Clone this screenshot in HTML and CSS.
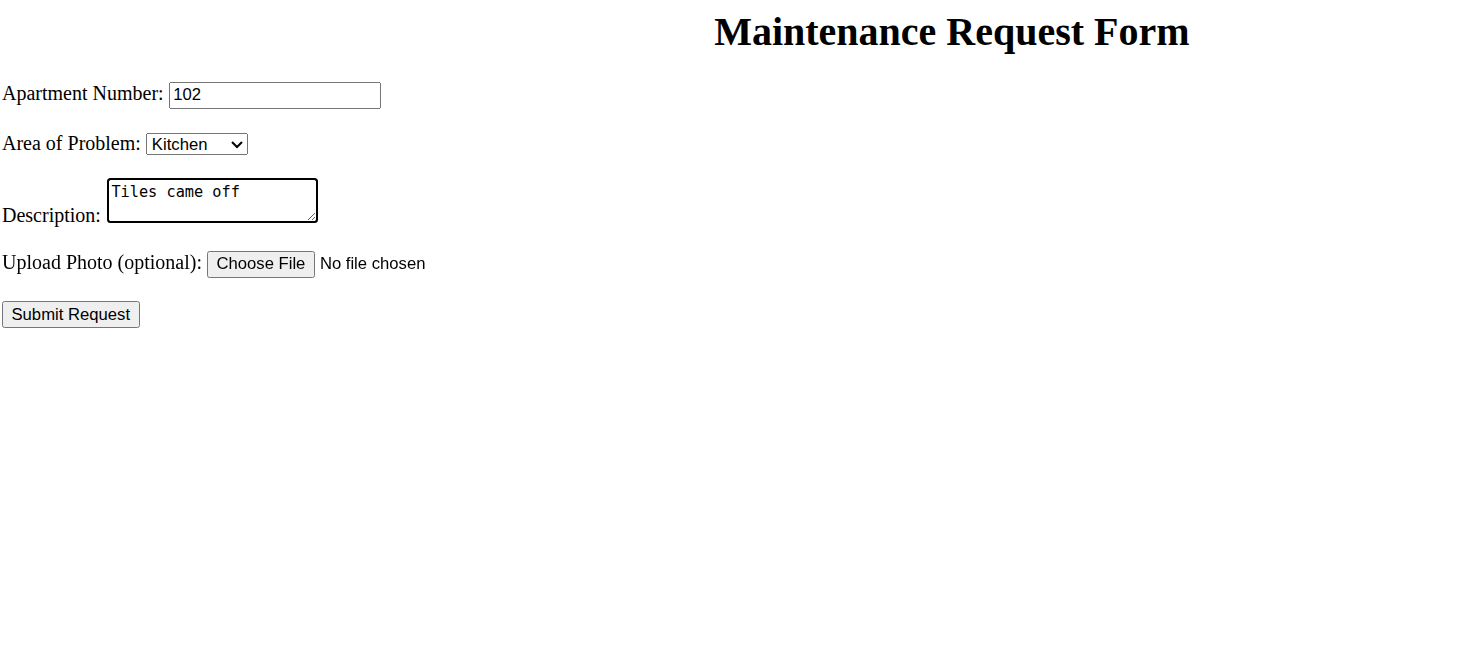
FILE: index.html
```html
<!DOCTYPE html>
<html lang="en">
<head>
<meta charset="utf-8">
<title>Maintenance Request Form</title>
<link rel="stylesheet" href="styles.css">
</head>
<body>
<h1 class="title">Maintenance Request Form</h1>
<form class="form">
  <div class="row"><label for="apt">Apartment Number:</label> <input id="apt" class="text-input" type="text" value="102"></div>
  <div class="row"><label for="area">Area of Problem:</label> <select id="area" class="select">
    <option>Kitchen</option>
    <option>Bathroom</option>
    <option>Bedroom</option>
    <option>Living Room</option>
  </select></div>
  <div class="row"><label for="desc">Description:</label> <textarea id="desc" class="textarea">Tiles came off</textarea></div>
  <div class="row"><label for="photo">Upload Photo (optional):</label> <input id="photo" class="file-input" type="file"></div>
  <div class="row"><button type="submit" class="submit">Submit Request</button></div>
</form>
<script src="script.js"></script>
</body>
</html>
```
FILE: styles.css
```css
html {
  zoom: 1.25;
}
body {
  margin: 0;
  font-family: "Liberation Serif", "Times New Roman", serif;
  font-size: 16px;
  color: #000;
  background: #fff;
}
.title {
  width: 1523px;
  margin: 6.4px 0 21.8px;
  text-align: center;
  font-size: 32px;
  font-weight: bold;
}
.form {
  padding-left: 1.6px;
}
.row {
  margin-bottom: 19px;
}
.text-input,
.select,
.file-input,
.submit {
  font-family: "Liberation Sans", Arial, sans-serif;
  font-size: 13.333px;
}
.text-input {
  box-sizing: border-box;
  width: 169.6px;
  height: 21px;
}
.select {
  box-sizing: border-box;
  width: 81.6px;
  height: 17.6px;
}
.textarea {
  font-family: "DejaVu Sans Mono", "Liberation Mono", monospace;
  font-size: 12.2px;
  width: 161.4px;
  height: 29px;
  margin-left: 1.6px;
}
.textarea:focus {
  outline: 2px solid #000;
  outline-offset: -1px;
  border-radius: 2px;
}
```
FILE: script.js
```js
var d = document.getElementById('desc');
d.focus();
d.setSelectionRange(d.value.length, d.value.length);
```
